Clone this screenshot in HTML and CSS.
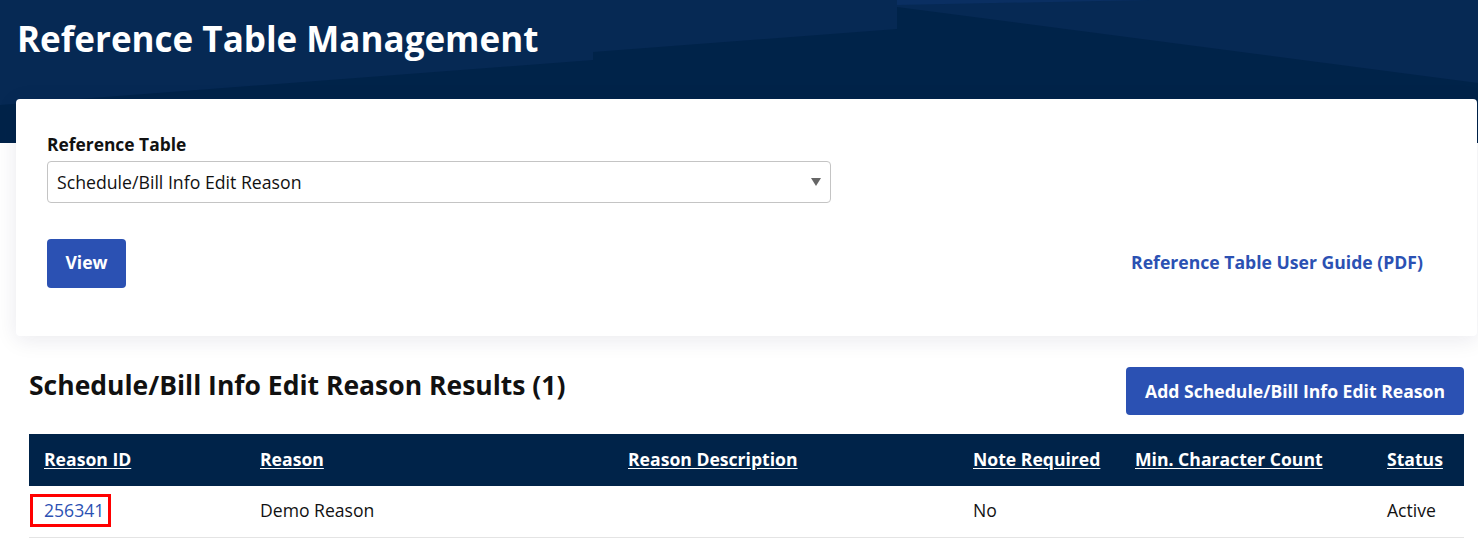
FILE: index.html
```html
<!DOCTYPE html>
<html lang="en">
<head>
<meta charset="utf-8">
<title>Reference Table Management</title>
<link rel="stylesheet" href="styles.css">
</head>
<body>
<header class="hero">
  <svg class="hero-bg" viewBox="0 0 1478 143" preserveAspectRatio="none" aria-hidden="true">
    <rect x="0" y="0" width="1478" height="143" fill="#002349"/>
    <polygon points="0,0 897,0 897,29 593,52 593,60 0,105" fill="#062954"/>
    <polygon points="897,0 1478,0 1478,83 897,7" fill="#062954"/>
    <polygon points="897,0 1150,0 897,5" fill="#0a2f62"/>
  </svg>
  <h1 class="hero-title">Reference Table Management</h1>
</header>

<main class="page">
  <section class="card">
    <label class="field-label" for="refTable">Reference Table</label>
    <div class="select-wrap">
      <select id="refTable" class="select">
        <option>Schedule/Bill Info Edit Reason</option>
      </select>
      <span class="select-arrow"></span>
    </div>
    <div class="card-actions">
      <button class="btn btn-view" type="button">View</button>
      <a class="guide-link" href="#">Reference Table User Guide (PDF)</a>
    </div>
  </section>

  <section class="results">
    <div class="results-head">
      <h2 class="results-title">Schedule/Bill Info Edit Reason Results (1)</h2>
      <button class="btn btn-add" type="button">Add Schedule/Bill Info Edit Reason</button>
    </div>
    <table class="grid">
      <colgroup>
        <col class="c-id"><col class="c-reason"><col class="c-desc"><col class="c-note"><col class="c-min"><col class="c-status">
      </colgroup>
      <thead>
        <tr>
          <th><a href="#">Reason ID</a></th>
          <th><a href="#">Reason</a></th>
          <th><a href="#">Reason Description</a></th>
          <th><a href="#">Note Required</a></th>
          <th><a href="#">Min. Character Count</a></th>
          <th><a href="#">Status</a></th>
        </tr>
      </thead>
      <tbody>
        <tr>
          <td class="id-cell"><a class="id-link" href="#">256341</a></td>
          <td>Demo Reason</td>
          <td></td>
          <td>No</td>
          <td></td>
          <td>Active</td>
        </tr>
      </tbody>
    </table>
  </section>
</main>
</body>
</html>
```

FILE: styles.css
```css
* { box-sizing: border-box; }

html, body {
  margin: 0;
  padding: 0;
  background: #ffffff;
  font-family: "Open Sans", "Noto Sans", "Liberation Sans", sans-serif;
  color: #111111;
}

.hero {
  position: relative;
  height: 143px;
  padding: 19px 0 0 17px;
  overflow: hidden;
}

.hero-bg {
  position: absolute;
  left: 0;
  top: 0;
  width: 100%;
  height: 100%;
  display: block;
}

.hero-title {
  position: relative;
  margin: 0;
  font-size: 35px;
  line-height: 40px;
  font-weight: 700;
  color: #ffffff;
}

.page {
  margin-top: -44px;
  position: relative;
}

.card {
  margin: 0 1px 0 16px;
  background: #ffffff;
  border-radius: 4px;
  padding: 33px 31px 48px 31px;
  box-shadow: 0 4px 22px rgba(20, 25, 70, 0.09);
}

.field-label {
  display: block;
  font-size: 17.4px;
  line-height: 24px;
  font-weight: 700;
  color: #111111;
  margin-bottom: 5px;
}

.select-wrap {
  position: relative;
  width: 784px;
}

.select {
  display: block;
  width: 100%;
  height: 42px;
  border: 1px solid #c4c4c4;
  border-radius: 4px;
  background: #ffffff;
  padding: 0 30px 0 9px;
  font-family: inherit;
  font-size: 17.7px;
  color: #111111;
  appearance: none;
  -webkit-appearance: none;
}

.select-arrow {
  position: absolute;
  right: 10px;
  top: 17px;
  width: 0;
  height: 0;
  border-left: 5px solid transparent;
  border-right: 5px solid transparent;
  border-top: 8px solid #666666;
  pointer-events: none;
}

.card-actions {
  display: flex;
  align-items: center;
  justify-content: space-between;
  margin-top: 36px;
}

.btn {
  border: 0;
  border-radius: 4px;
  background: #2b51b3;
  color: #ffffff;
  font-family: inherit;
  font-weight: 700;
  cursor: pointer;
}

.btn-view {
  width: 79px;
  height: 49px;
  padding: 0 0 3px 0;
  font-size: 17.5px;
}

.guide-link {
  margin: 0 23px 3px 0;
  color: #2b51b3;
  font-weight: 700;
  font-size: 17.6px;
  text-decoration: none;
}

.results {
  padding: 31px 14px 0 29px;
}

.results-head {
  display: flex;
  justify-content: space-between;
  align-items: flex-start;
}

.results-title {
  margin: 3px 0 0 0;
  font-size: 26.5px;
  line-height: 30px;
  font-weight: 700;
  color: #111111;
}

.btn-add {
  height: 48px;
  padding: 0 19px;
  font-size: 17.6px;
}

.grid {
  width: 100%;
  margin-top: 19px;
  border-collapse: collapse;
  table-layout: fixed;
  font-size: 17.6px;
}

.c-id { width: 216px; }
.c-reason { width: 368px; }
.c-desc { width: 345px; }
.c-note { width: 162px; }
.c-min { width: 252px; }
.c-status { width: 92px; }

.grid thead tr {
  background: #002349;
}

.grid th {
  height: 52px;
  padding: 0 15px 2px 15px;
  text-align: left;
  font-weight: 700;
  white-space: nowrap;
}

.grid th a {
  color: #ffffff;
  text-decoration: underline;
  text-underline-offset: 2px;
}

.grid td {
  height: 51px;
  padding: 0 15px 2px 15px;
  border-bottom: 1px solid #e4e4e4;
  color: #111111;
  white-space: nowrap;
}

.grid td.id-cell {
  padding-left: 1px;
}

.id-link {
  display: inline-block;
  border: 3px solid #ff0000;
  padding: 2px 4px 2px 11px;
  line-height: 23px;
  color: #2b51b3;
  text-decoration: none;
}
```
